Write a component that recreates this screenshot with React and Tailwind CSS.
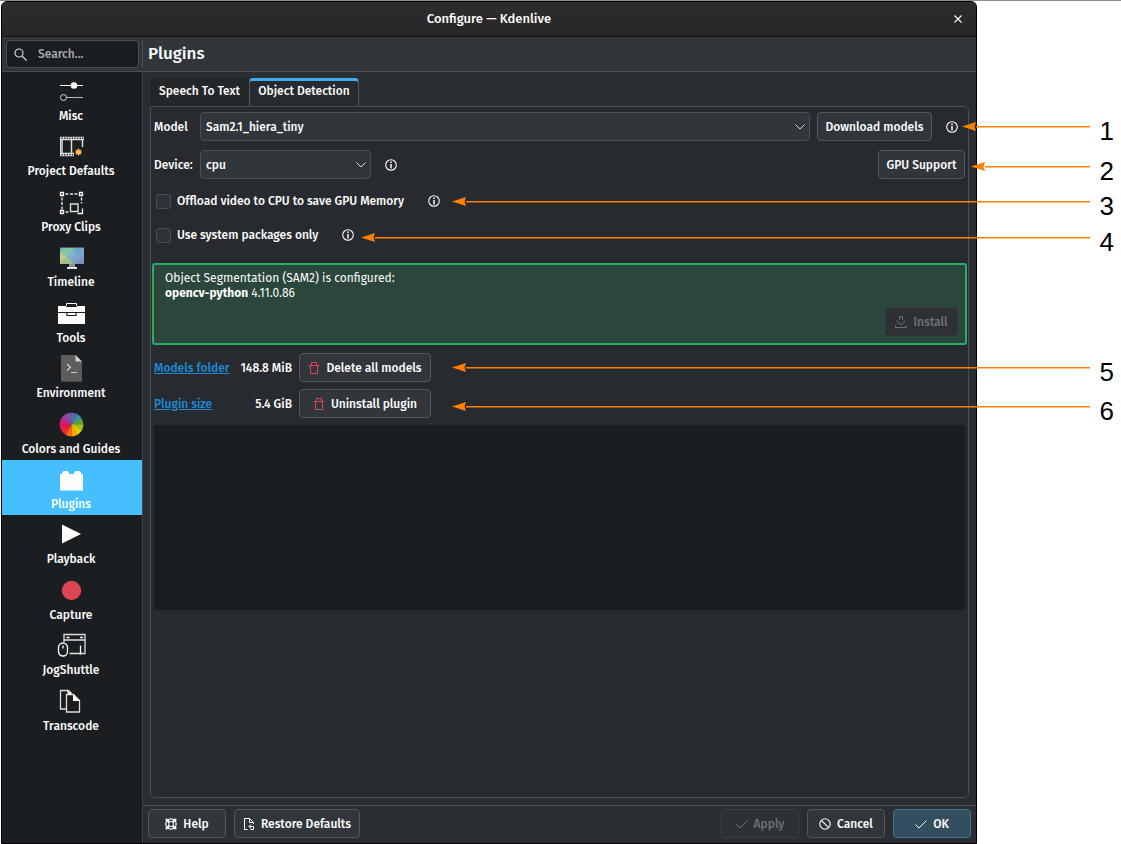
import { useState } from "react";

const WEDGES = [
  "#4a8f9a",
  "#5aa53c",
  "#9fc41a",
  "#e3d400",
  "#f2a900",
  "#f56a1c",
  "#ee2b2b",
  "#e5184f",
  "#d61a7c",
  "#a93a9a",
  "#7a55a8",
  "#4d6fb0",
];

function Icon({ children }) {
  return (
    <svg width="28" height="24" viewBox="0 0 28 24" className="overflow-visible" fill="none" aria-hidden="true">
      {children}
    </svg>
  );
}

function MiscIcon() {
  return (
    <Icon>
      <path d="M3 4.5h23" stroke="#fcfcfc" />
      <circle cx="17" cy="4.5" r="3.3" fill="#fcfcfc" />
      <path d="M9.5 16.5H26" stroke="#b8babb" />
      <circle cx="6.5" cy="16.5" r="3" stroke="#d5d6d6" />
    </Icon>
  );
}

function ProjectIcon() {
  return (
    <Icon>
      <path d="M3 2.5h24M3 18.5h14" stroke="#dcdddd" strokeWidth="3.6" />
      <path d="M4.5 2.2H27M4.5 18.8H17" stroke="#1b1e20" strokeWidth="1.4" strokeDasharray="1.2 1.4" />
      <path d="M5 4v13M14.5 4v13M25.5 4v7" stroke="#dcdddd" strokeWidth="1.5" />
      <path d="M3.5 1v19" stroke="#dcdddd" />
      <circle cx="21.5" cy="16" r="2.6" fill="#fdbc4b" />
      <path d="M21.5 12.5v7M18 16h7M19 13.5l5 5M24 13.5l-5 5" stroke="#fdbc4b" />
    </Icon>
  );
}

function ProxyIcon() {
  return (
    <Icon>
      <path d="M3.5.5h3v3h-3zM22.5.5h3v3h-3zM3.5 18.5h3v3h-3z" stroke="#fcfcfc" strokeWidth="1.3" />
      <path d="M8.5 2H21M5 5.5v12M24.5 5.5v6M8.5 20h3" stroke="#e5e5e5" strokeWidth="1.4" strokeDasharray="3 1.5" />
      <path d="M13.5 12H21v7.5h-7.5z" stroke="#dcdddd" strokeWidth="1.4" />
      <path d="M25.5 16.5v5h-5" stroke="#fcfcfc" strokeWidth="1.3" />
    </Icon>
  );
}

function TimelineIcon() {
  return (
    <Icon>
      <defs>
        <linearGradient id="screen" x1="0" y1="0" x2="1" y2="1">
          <stop offset="0" stopColor="#6fb7a8" />
          <stop offset="0.45" stopColor="#7fb6cf" />
          <stop offset="1" stopColor="#7d84bd" />
        </linearGradient>
      </defs>
      <path d="M3 0h24v17H3z" fill="url(#screen)" />
      <path d="M3 5l7 5-7 7z" fill="#c5c787" />
      <path d="M10 10l6-10H9L3 5z" fill="#86c4a6" />
      <path d="M16 0l5 9 6-9z" fill="#6ba7cf" />
      <path d="M10 10l7 7H3z" fill="#9cc08a" />
      <path d="M3 .5h24" stroke="#4d5d66" />
      <path d="M12 17h6v3h-6z" fill="#8a9093" />
      <path d="M10 20h10v2H10z" fill="#dfe1e2" />
    </Icon>
  );
}

function ToolsIcon() {
  return (
    <Icon>
      <path d="M9.5 3V.5h10V3" stroke="#fcfcfc" />
      <path d="M1 3h27v6H1zM1 10h27v11H1z" fill="#fcfcfc" />
      <path d="M10 9v3.5h9V9" stroke="#1b1e20" strokeWidth="1.2" />
      <path d="M9 3.5h11" stroke="#1b1e20" />
    </Icon>
  );
}

function EnvironmentIcon() {
  return (
    <Icon>
      <path d="M4-3h14.5L25 3.500V24H4z" fill="#5d5d5d" />
      <path d="M18.500-3L25 3.500h-6.500z" fill="#cfcfcf" />
      <path d="M10 6l3.500 3.200L10 12.500M14 14.500h6" stroke="#d0d0d0" strokeWidth="1.2" />
      <path d="M4 23.500h21" stroke="#474747" />
    </Icon>
  );
}

function ColorsIcon() {
  const point = (i) => {
    const a = (i * Math.PI) / 6;
    return `${14.5 + 11.7 * Math.cos(a)} ${10.5 - 11.7 * Math.sin(a)}`;
  };
  // Clockwise from the upper right
  const order = [1, 0, 11, 10, 9, 8, 7, 6, 5, 4, 3, 2];
  return (
    <Icon>
      {order.map((slot, i) => (
        <path
          key={slot}
          d={`M14.5 10.5L${point(slot)}A11.7 11.7 0 0 0 ${point(slot + 1)}z`}
          fill={WEDGES[i]}
          stroke={WEDGES[i]}
          strokeWidth="0.3"
        />
      ))}
    </Icon>
  );
}

function PluginsIcon() {
  return (
    <Icon>
      <path d="M3 5h2V3.500L6.500 2h4L12 3.500V5h5V3.500L18.500 2h4L24 3.500V5h2v16.500H3z" fill="#fcfcfc" />
    </Icon>
  );
}

function PlaybackIcon() {
  return (
    <Icon>
      <path d="M5 .5L24 10 5 19.500z" fill="#fcfcfc" />
    </Icon>
  );
}

function CaptureIcon() {
  return (
    <Icon>
      <circle cx="14.5" cy="10.5" r="9.7" fill="#da4453" />
    </Icon>
  );
}

function JogIcon() {
  return (
    <Icon>
      <path d="M7 7V-.500h21V18.500H12.500M7 5h21" stroke="#dcdddd" strokeWidth="1.3" />
      <path d="M9.500 2.500h3M23 2.500h3" stroke="#fcfcfc" strokeWidth="1.5" />
      <path d="M23.500 10.500v9" stroke="#fcfcfc" strokeWidth="1.3" />
      <rect x="1.5" y="8" width="9" height="13" rx="4.5" stroke="#fcfcfc" strokeWidth="1.3" />
      <path d="M6 10.500v3" stroke="#fcfcfc" strokeWidth="1.3" />
    </Icon>
  );
}

function TranscodeIcon() {
  return (
    <Icon>
      <path d="M9 18H3.500V-.500h8l3 3" stroke="#dcdddd" strokeWidth="1.3" />
      <path d="M9.500 3.500h7l6 6V21h-13z" stroke="#dcdddd" strokeWidth="1.3" />
      <path d="M10-.500l6 4h-5zM16 3.500l7 6.500h-7z" fill="#fcfcfc" />
    </Icon>
  );
}

const pages = [
  { name: "Misc", icon: MiscIcon },
  { name: "Project Defaults", icon: ProjectIcon },
  { name: "Proxy Clips", icon: ProxyIcon },
  { name: "Timeline", icon: TimelineIcon },
  { name: "Tools", icon: ToolsIcon },
  { name: "Environment", icon: EnvironmentIcon },
  { name: "Colors and Guides", icon: ColorsIcon },
  { name: "Plugins", icon: PluginsIcon },
  { name: "Playback", icon: PlaybackIcon },
  { name: "Capture", icon: CaptureIcon },
  { name: "JogShuttle", icon: JogIcon },
  { name: "Transcode", icon: TranscodeIcon },
];

const callouts = [
  { number: 1, top: "top-[116px]", width: "w-[128px]" },
  { number: 2, top: "top-[156px]", width: "w-[119px]" },
  { number: 3, top: "top-[191px]", width: "w-[638px]" },
  { number: 4, top: "top-[227px]", width: "w-[729px]" },
  { number: 5, top: "top-[357px]", width: "w-[638px]" },
  { number: 6, top: "top-[396px]", width: "w-[638px]" },
];

function InfoButton({ label }) {
  return (
    <button aria-label={label} className="shrink-0">
      <svg width="12" height="12" viewBox="0 0 12 12" fill="none">
        <circle cx="6" cy="6" r="5.3" stroke="#fcfcfc" strokeWidth="1.1" />
        <path d="M6 5v4.500M6 2.500V4" stroke="#fcfcfc" strokeWidth="1.5" />
      </svg>
    </button>
  );
}

function SmallIcon({ children }) {
  return (
    <svg width="12" height="12" viewBox="0 0 12 12" fill="none" stroke="currentColor" aria-hidden="true">
      {children}
    </svg>
  );
}

function TrashIcon() {
  return (
    <span className="text-[#da4453]">
      <SmallIcon>
        <path d="M.5 3.500h11M2.500 3.500v8h7v-8M3.500 3V.500h5V3" />
      </SmallIcon>
    </span>
  );
}

function CheckIcon() {
  return (
    <SmallIcon>
      <path d="M.5 6.500L4 10l7.500-7.500" />
    </SmallIcon>
  );
}

function Button({ className = "", ...props }) {
  return (
    <button
      className={`flex h-[29px] shrink-0 items-center justify-center gap-[6px] whitespace-nowrap rounded-[4px] border ${className}`}
      {...props}
    />
  );
}

const normal = "border-[#53575b] bg-[#31363b]";

function Select({ id, className, children }) {
  return (
    <div className={`relative ${className}`}>
      <select
        id={id}
        className="block h-[29px] w-full appearance-none rounded-[4px] border border-[#4b4f54] bg-[#31363b] pl-[5px] pr-6 outline-none"
      >
        {children}
      </select>
      <svg
        width="10"
        height="6"
        viewBox="0 0 10 6"
        fill="none"
        stroke="#d5d6d6"
        className="pointer-events-none absolute right-[5px] top-3"
        aria-hidden="true"
      >
        <path d="M.5 .5L5 5l4.500-4.500" />
      </svg>
    </div>
  );
}

function Check({ id, label, info }) {
  return (
    <div className="flex h-[34px] items-center">
      <input
        id={id}
        type="checkbox"
        className="size-[15px] shrink-0 appearance-none rounded-[3px] border border-[#4b4f54] bg-[#2f3338] checked:bg-[#3daee9]"
      />
      <label htmlFor={id} className="ml-[6px] mr-6">
        {label}
      </label>
      <InfoButton label={info} />
    </div>
  );
}

function DiskUsage({ href, name, size, action }) {
  return (
    <div className="flex items-center">
      <div className="flex w-[138px] justify-between">
        <a href={href} className="text-[#1d8ad8] underline">
          {name}
        </a>
        <span>{size}</span>
      </div>
      <Button className={`ml-[7px] w-[132px] ${normal}`}>
        <TrashIcon />
        {action}
      </Button>
    </div>
  );
}

// Hangs from the right edge, so the arrow keeps its tip when the window grows
function Callout({ number, top, width }) {
  return (
    <div className={`pointer-events-none absolute right-0 flex items-start pr-[7px] ${top}`}>
      <div className={`mt-[5px] flex items-center ${width}`}>
        <svg width="14" height="9" viewBox="0 0 14 9" className="shrink-0" aria-hidden="true">
          <path d="M0 4.500L14 0l-1.500 4.500L14 9z" fill="#ff7f00" />
        </svg>
        <div className="h-px flex-1 bg-[#ff7f00] shadow-[0_1px_0_#ff7f0080]" />
      </div>
      <span className="ml-[10px] font-['Liberation_Sans',Arial,sans-serif] text-[26px] font-normal leading-7 text-black">
        {number}
      </span>
    </div>
  );
}

export default function App() {
  const [page, setPage] = useState("Plugins");

  return (
    <div className="relative flex min-h-screen border-t border-[#8c8c8c] bg-white pl-px pr-[144px] font-['Fira_Sans','Noto_Sans',sans-serif] text-[12px] font-medium leading-4 text-[#fcfcfc]">
      <div className="flex flex-1 flex-col overflow-hidden rounded-t-[6px] border border-black bg-[#2a2e32]">
        {/* Title bar */}
        <div className="flex h-[35px] items-center border-b border-[#101112] bg-linear-to-b from-[#2d2d2d] to-[#262626]">
          <div className="w-9" />
          <h1 className="flex-1 text-center text-[13px]">Configure — Kdenlive</h1>
          <button aria-label="Close" className="flex w-9 justify-center">
            <svg width="8" height="8" viewBox="0 0 8 8" stroke="#fcfcfc" strokeWidth="1.1" aria-hidden="true">
              <path d="M.5 .5l7 7M7.500 .5l-7 7" />
            </svg>
          </button>
        </div>

        {/* Header */}
        <div className="flex h-[35px] items-center border-b border-[#4b4f54] bg-[#31363b]">
          <div className="flex w-[141px] shrink-0 items-center border-r border-[#4b4f54] px-[3px]">
            <label className="ml-px flex h-7 w-full items-center gap-[11px] rounded-[4px] border border-[#4b4f54] bg-[#1b1e20] pl-[7px]">
              <svg
                width="13"
                height="13"
                viewBox="0 0 13 13"
                fill="none"
                stroke="#d5d6d6"
                strokeWidth="1.2"
                className="shrink-0"
                aria-hidden="true"
              >
                <circle cx="5" cy="5" r="4" />
                <path d="M8 8l4.500 4.500" />
              </svg>
              <input
                aria-label="Search"
                placeholder="Search..."
                className="w-full min-w-0 bg-transparent outline-none placeholder:text-[#a1a9b1]"
              />
            </label>
          </div>
          <h2 className="pl-[5px] text-[17px] leading-5">{page}</h2>
        </div>

        <div className="flex flex-1">
          {/* Page list */}
          <nav className="w-[141px] shrink-0 border-r border-[#3c4045] bg-[#1b1e20]">
            <div className="grid h-[665px] auto-rows-fr">
              {pages.map(({ name, icon: PageIcon }) => (
                <button
                  key={name}
                  onClick={() => setPage(name)}
                  className={`flex flex-col items-center whitespace-nowrap pr-[2px] pt-[9px] ${
                    page === name ? "bg-[#45bfff]" : ""
                  }`}
                >
                  <PageIcon />
                  <span className="mt-[3px]">{name}</span>
                </button>
              ))}
            </div>
          </nav>

          <div className="flex min-w-0 flex-1 flex-col">
            <div className="flex flex-1 flex-col px-[7px] pb-[7px] pt-[6px]">
              {/* Tabs */}
              <div role="tablist" className="flex">
                <button role="tab" aria-selected="false" className="h-7 w-[99px] rounded-tl-[4px] bg-[#24272a] pb-[2px]">
                  Speech To Text
                </button>
                <button
                  role="tab"
                  aria-selected="true"
                  className="-mb-px h-[29px] w-[110px] rounded-t-[4px] border-x border-t-3 border-x-[#53575b] border-t-[#3daee9] bg-[#272a2e] pb-[6px]"
                >
                  Object Detection
                </button>
              </div>

              <div className="flex-1 rounded-b-[5px] rounded-tr-[5px] border border-[#4b4f54] bg-[#272a2e] px-[3px] pt-[5px]">
                <div className="flex items-center">
                  <label htmlFor="model" className="w-[46px] shrink-0">
                    Model
                  </label>
                  <Select id="model" className="flex-1">
                    <option>Sam2.1_hiera_tiny</option>
                  </Select>
                  <Button className={`ml-[7px] mr-[14px] w-[115px] ${normal}`}>Download models</Button>
                  <InfoButton label="About models" />
                  <div className="w-[7px]" />
                </div>

                <div className="mt-[9px] flex items-center">
                  <label htmlFor="device" className="w-[46px] shrink-0">
                    Device:
                  </label>
                  <Select id="device" className="mr-[14px] w-[171px]">
                    <option>cpu</option>
                  </Select>
                  <InfoButton label="About devices" />
                  <Button className={`ml-auto w-[87px] ${normal}`}>GPU Support</Button>
                </div>

                <div className="mt-[5px] pl-[2px]">
                  <Check id="offload" label="Offload video to CPU to save GPU Memory" info="About offloading" />
                  <Check id="system" label="Use system packages only" info="About system packages" />
                </div>

                {/* Status message */}
                <div className="-mx-[2px] mt-[11px] flex h-[82px] rounded-[3px] border-2 border-[#27ae60] bg-[#2b463b] px-[11px] pt-[6px]">
                  <p className="flex-1 font-normal leading-[15px]">
                    Object Segmentation (SAM2) is configured:
                    <br />
                    <b>opencv-python</b> 4.11.0.86
                  </p>
                  <Button disabled className="-mr-1 mb-[7px] w-[73px] self-end border-[#33373b] bg-[#2d3136] text-[#6e7275]">
                    <SmallIcon>
                      <path d="M4.500 4V.500h3V4M1.500 4.500L6 9l4.500-4.500M.5 9.500v2h11v-2" />
                    </SmallIcon>
                    Install
                  </Button>
                </div>

                <div className="mt-2 flex flex-col gap-[7px]">
                  <DiskUsage href="#models" name="Models folder" size="148.8 MiB" action="Delete all models" />
                  <DiskUsage href="#plugin" name="Plugin size" size="5.4 GiB" action="Uninstall plugin" />
                </div>

                <textarea
                  readOnly
                  aria-label="Output"
                  className="mt-[7px] block h-[185px] w-full resize-none bg-[#1b1e20] p-1 outline-none"
                />
              </div>
            </div>

            {/* Dialog buttons */}
            <div className="flex items-center gap-2 border-t border-[#4b4f54] px-[5px] pb-[5px] pt-[3px]">
              <Button className={`w-[78px] ${normal}`}>
                <SmallIcon>
                  <circle cx="6" cy="6" r="5.2" strokeWidth="1.2" />
                  <circle cx="6" cy="6" r="2.5" />
                  <path d="M1 1l3.200 3.200M11 1L7.800 4.200M1 11l3.200-3.200M11 11L7.800 7.800" strokeWidth="2.4" />
                </SmallIcon>
                Help
              </Button>
              <Button className={`w-[126px] ${normal}`}>
                <SmallIcon>
                  <path d="M4.500 11.500h-3V.500h5l4 4v1.500M6.500 .5v4h4" />
                  <path d="M6 8.500h4.500v3H7.500M8 6.500l-2 2 2 2" />
                </SmallIcon>
                Restore Defaults
              </Button>
              <Button disabled className="ml-auto w-[78px] border-[#3a3e42] bg-[#2d3135] text-[#6e7275]">
                <CheckIcon />
                Apply
              </Button>
              <Button className={`w-[78px] ${normal}`}>
                <SmallIcon>
                  <circle cx="6" cy="6" r="5.2" strokeWidth="1.1" />
                  <path d="M2.300 2.300l7.400 7.400" strokeWidth="1.1" />
                </SmallIcon>
                Cancel
              </Button>
              <Button className="w-[78px] border-[#3f7797] bg-[#334e5e]">
                <CheckIcon />
                OK
              </Button>
            </div>
          </div>
        </div>
      </div>

      {callouts.map((callout) => (
        <Callout key={callout.number} {...callout} />
      ))}
    </div>
  );
}
